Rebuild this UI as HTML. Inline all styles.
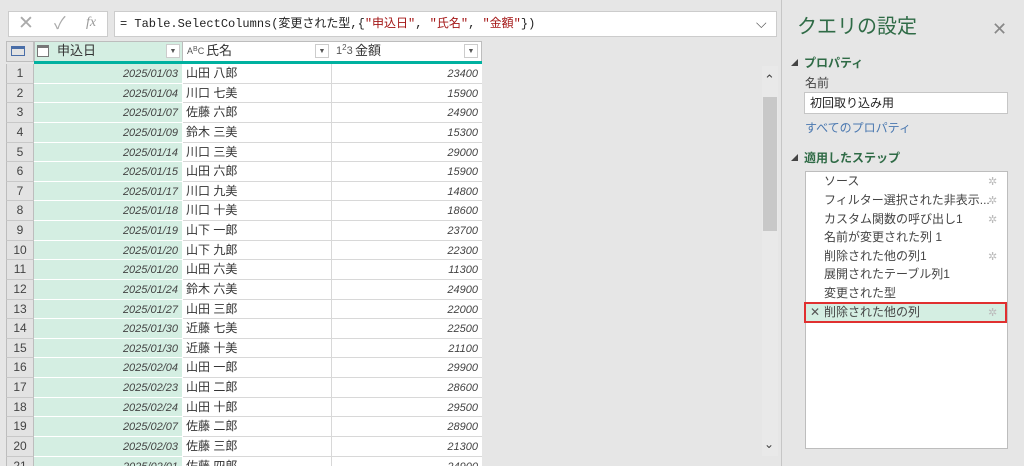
<!DOCTYPE html><html><head><meta charset="utf-8"><style>
*{margin:0;padding:0;box-sizing:border-box;line-height:1.2}
html,body{width:1024px;height:466px;overflow:hidden}
body{background:#e6e6e6;font-family:"Liberation Sans","Noto Sans CJK JP",sans-serif;position:relative;color:#333}
.a{position:absolute;white-space:nowrap}
.row{position:absolute;left:6px;width:476px}
.row div{position:absolute;top:0;height:100%;font-size:12px;border-bottom:1px solid #d8d8d8;overflow:hidden;display:flex;align-items:center}
.n{left:0;width:28px;background:#e3e3e3;justify-content:center;border-left:1px solid #bdbdbd;border-right:1px solid #bdbdbd;color:#444;border-bottom-color:#c8c8c8!important}
.d{left:28px;width:149px;background:#d4eee2;justify-content:flex-end;padding-right:4px;padding-top:3px;font-style:italic;font-size:11px!important;color:#444;border-right:1px solid #fff;border-bottom-color:#fff!important}
.m{left:177px;width:149px;background:#fff;padding-left:3px;border-right:1px solid #d8d8d8}
.v{left:326px;width:150px;background:#fff;justify-content:flex-end;padding-right:4px;padding-top:3px;font-style:italic;font-size:11px!important;color:#444}
.st{position:absolute;left:824px;font-size:12px;color:#444;line-height:16px;white-space:nowrap}
.g{position:absolute;left:988px;color:#bbb;font-size:11px;line-height:14px}
.hd{position:absolute;top:41px;height:21px;line-height:20px;font-size:13px;color:#333}
.dd{position:absolute;top:44px;width:14px;height:14px;background:#fff;border:1px solid #ccc;font-size:7px;text-align:center;line-height:13px;color:#555}
</style></head><body>
<div class="a" style="left:8px;top:11px;width:100px;height:26px;background:#fff;border:1px solid #ccc"></div>
<div class="a" style="left:18px;top:13px;font-size:19px;color:#aaa;line-height:22px">✕</div>
<div class="a" style="left:54px;top:13px;font-size:17px;color:#aaa;line-height:22px">✓</div>
<div class="a" style="left:86px;top:14px;font-size:14px;color:#999;font-style:italic;font-family:'Liberation Serif',serif;line-height:18px">fx</div>
<div class="a" style="left:114px;top:11px;width:663px;height:26px;background:#fff;border:1px solid #ccc"></div>
<div class="a" style="left:120px;top:15px;font-size:12px;font-family:'Liberation Mono','Noto Sans CJK JP',monospace;color:#222;line-height:18px">= Table.SelectColumns(変更された型,{<span style="color:#a31515">"申込日"</span>, <span style="color:#a31515">"氏名"</span>, <span style="color:#a31515">"金額"</span>})</div>
<div class="a" style="left:756px;top:14px;font-size:14px;color:#555;line-height:18px">⌵</div>
<div class="a" style="left:6px;top:41px;width:476px;height:21px;background:#fff;border:1px solid #bdbdbd"></div>
<div class="a" style="left:6px;top:41px;width:28px;height:21px;background:#e3e3e3;border:1px solid #bdbdbd"></div>
<div class="a" style="left:11px;top:46px;width:14px;height:10px;border:1px solid #4a6ea8;border-top:3px solid #4a6ea8"></div>
<div class="a" style="left:34px;top:41px;width:149px;height:21px;background:#d4eee2;border:1px solid #bdbdbd"></div>
<div class="a" style="left:37px;top:45px;width:12px;height:12px;border:1px solid #777;border-top:3px solid #777;background:#fff"></div>
<div class="hd" style="left:57px">申込日</div>
<div class="dd" style="left:166px">▼</div>
<div class="hd" style="left:187px;font-size:9px;color:#555">A<span style="font-size:7px;vertical-align:3px">B</span>C</div>
<div class="hd" style="left:206px">氏名</div>
<div class="dd" style="left:315px">▼</div>
<div class="hd" style="left:336px;font-size:11px;color:#555">1<span style="font-size:8px;vertical-align:4px">2</span>3</div>
<div class="hd" style="left:355px">金額</div>
<div class="dd" style="left:464px">▼</div>
<div class="a" style="left:34px;top:61px;width:448px;height:3px;background:#00b1a0"></div>
<div id="rows"></div>
<div class="a" style="left:762px;top:66px;width:16px;height:390px;background:#e9e9e9"></div>
<div class="a" style="left:764px;top:72px;font-size:13px;color:#444;line-height:16px">⌃</div>
<div class="a" style="left:763px;top:97px;width:14px;height:134px;background:#c8c8c8"></div>
<div class="a" style="left:764px;top:436px;font-size:12px;color:#444;line-height:16px">⌄</div>
<div class="a" style="left:781px;top:0;width:1px;height:466px;background:#c6c6c6"></div>
<div class="a" style="left:797px;top:14px;font-size:20px;color:#2f6b46;line-height:26px">クエリの設定</div>
<div class="a" style="left:992px;top:18px;font-size:18px;color:#888;line-height:22px">✕</div>
<div class="a" style="left:791px;top:60px;font-size:7px;color:#444;line-height:8px">◢</div>
<div class="a" style="left:804px;top:55px;font-size:12px;font-weight:bold;color:#2f6b46;line-height:16px">プロパティ</div>
<div class="a" style="left:805px;top:75px;font-size:12px;color:#444;line-height:16px">名前</div>
<div class="a" style="left:804px;top:92px;width:204px;height:22px;background:#fff;border:1px solid #c6c6c6;font-size:12px;padding:2px 5px;color:#222;line-height:16px">初回取り込み用</div>
<div class="a" style="left:805px;top:120px;font-size:12px;color:#4a78b0;line-height:16px">すべてのプロパティ</div>
<div class="a" style="left:791px;top:155px;font-size:7px;color:#444;line-height:8px">◢</div>
<div class="a" style="left:804px;top:150px;font-size:12px;font-weight:bold;color:#2f6b46;line-height:16px">適用したステップ</div>
<div class="a" style="left:805px;top:171px;width:203px;height:278px;background:#fff;border:1px solid #bdbdbd"></div>
<div class="a" style="left:804px;top:302px;width:203px;height:21px;background:#d4eee2;border:2px solid #e03030"></div>
<div class="st" style="top:173px">ソース</div><div class="g" style="top:175px">✲</div>
<div class="st" style="top:192px">フィルター選択された非表示...</div><div class="g" style="top:194px">✲</div>
<div class="st" style="top:211px">カスタム関数の呼び出し1</div><div class="g" style="top:213px">✲</div>
<div class="st" style="top:229px">名前が変更された列 1</div>
<div class="st" style="top:248px">削除された他の列1</div><div class="g" style="top:250px">✲</div>
<div class="st" style="top:266px">展開されたテーブル列1</div>
<div class="st" style="top:285px">変更された型</div>
<div class="st" style="top:304px">削除された他の列</div><div class="g" style="top:306px">✲</div>
<div class="a" style="left:810px;top:304px;font-size:12px;color:#555;line-height:16px">✕</div>
<script>
var d=[["2025/01/03","山田 八郎",23400],["2025/01/04","川口 七美",15900],["2025/01/07","佐藤 六郎",24900],["2025/01/09","鈴木 三美",15300],["2025/01/14","川口 三美",29000],["2025/01/15","山田 六郎",15900],["2025/01/17","川口 九美",14800],["2025/01/18","川口 十美",18600],["2025/01/19","山下 一郎",23700],["2025/01/20","山下 九郎",22300],["2025/01/20","山田 六美",11300],["2025/01/24","鈴木 六美",24900],["2025/01/27","山田 三郎",22000],["2025/01/30","近藤 七美",22500],["2025/01/30","近藤 十美",21100],["2025/02/04","山田 一郎",29900],["2025/02/23","山田 二郎",28600],["2025/02/24","山田 十郎",29500],["2025/02/07","佐藤 二郎",28900],["2025/02/03","佐藤 三郎",21300],["2025/02/01","佐藤 四郎",24900]];
var h="";d.forEach(function(r,i){var t=Math.round(64+i*19.63),t2=Math.round(64+(i+1)*19.63);h+='<div class="row" style="top:'+t+'px;height:'+(t2-t)+'px"><div class="n">'+(i+1)+'</div><div class="d">'+r[0]+'</div><div class="m">'+r[1]+'</div><div class="v">'+r[2]+'</div></div>';});
document.getElementById("rows").innerHTML=h;
</script>
</body></html>
